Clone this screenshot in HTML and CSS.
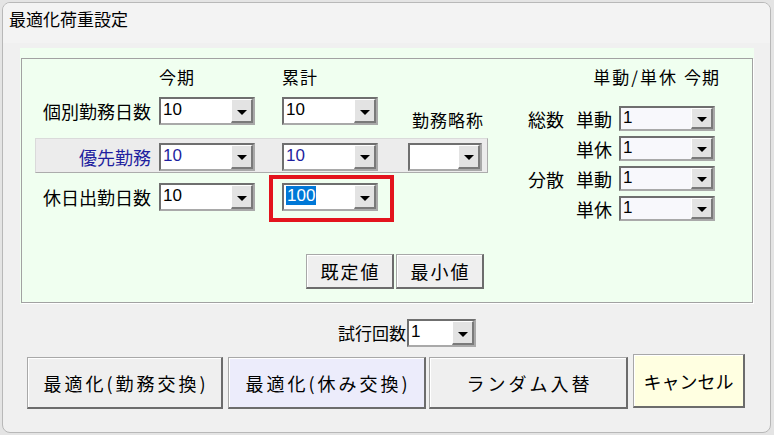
FILE: index.html
```html
<!DOCTYPE html>
<html lang="ja">
<head>
<meta charset="utf-8">
<title>最適化荷重設定</title>
<link rel="stylesheet" href="styles.css">
</head>
<body>
<div class="window">
  <div class="titlebar">最適化荷重設定</div>
  <div class="panel">
    <div class="frame">
      <div class="upper">
        <div class="left">
          <div class="hrow">
            <span class="lab-cell"></span>
            <span class="hcell">今期</span>
            <span class="sp1"></span>
            <span class="hcell">累計</span>
          </div>
          <div class="row r1">
            <span class="lab-cell">個別勤務日数</span>
            <div class="combo c-main"><span class="val">10</span><span class="dd"><i class="tri"></i></span></div>
            <span class="sp1"></span>
            <div class="combo c-main"><span class="val">10</span><span class="dd"><i class="tri"></i></span></div>
            <span class="sp2"></span>
            <span class="abbr">勤務略称</span>
          </div>
          <div class="row band">
            <span class="lab-cell blue">優先勤務</span>
            <div class="combo c-main"><span class="val blue">10</span><span class="dd"><i class="tri"></i></span></div>
            <span class="sp1"></span>
            <div class="combo c-main"><span class="val blue">10</span><span class="dd"><i class="tri"></i></span></div>
            <span class="sp2"></span>
            <div class="combo c-short"><span class="val"></span><span class="dd"><i class="tri"></i></span></div>
          </div>
          <div class="row r3">
            <span class="lab-cell">休日出勤日数</span>
            <div class="combo c-main"><span class="val">10</span><span class="dd"><i class="tri"></i></span></div>
            <span class="sp1"></span>
            <div class="combo c-main marked"><span class="val"><span class="sel">100</span></span><span class="dd"><i class="tri"></i></span><span class="hl"></span></div>
          </div>
        </div>
        <div class="right">
          <div class="rhead"><span class="rh1">単動/単休</span><span class="rh2">今期</span></div>
          <div class="rrow first">
            <span class="grp">総数</span><span class="sub">単動</span>
            <div class="combo c-right"><span class="val">1</span><span class="dd"><i class="tri"></i></span></div>
          </div>
          <div class="rrow">
            <span class="grp"></span><span class="sub">単休</span>
            <div class="combo c-right"><span class="val">1</span><span class="dd"><i class="tri"></i></span></div>
          </div>
          <div class="rrow">
            <span class="grp">分散</span><span class="sub">単動</span>
            <div class="combo c-right"><span class="val">1</span><span class="dd"><i class="tri"></i></span></div>
          </div>
          <div class="rrow">
            <span class="grp"></span><span class="sub">単休</span>
            <div class="combo c-right"><span class="val">1</span><span class="dd"><i class="tri"></i></span></div>
          </div>
        </div>
      </div>
      <div class="presets">
        <button class="btn preset">既定値</button>
        <button class="btn preset">最小値</button>
      </div>
    </div>
  </div>
  <div class="trials">
    <span class="tlabel">試行回数</span>
    <div class="combo c-trial"><span class="val">1</span><span class="dd"><i class="tri"></i></span></div>
  </div>
  <div class="actions">
    <button class="btn act a1">最適化(勤務交換)</button>
    <button class="btn act a2">最適化(休み交換)</button>
    <button class="btn act a3">ランダム入替</button>
    <button class="btn act a4">キャンセル</button>
  </div>
</div>
</body>
</html>
```
FILE: styles.css
```css
html, body {
  margin: 0;
  padding: 0;
}
body {
  background: #e4e4e4;
  width: 774px;
  height: 435px;
  overflow: hidden;
  font-family: "Noto Sans CJK JP", "Liberation Sans", sans-serif;
  color: #000;
}
.window {
  box-sizing: border-box;
  margin: 2px 0 0 2px;
  width: 769px;
  height: 431px;
  border: 1px solid #b8b8b8;
  border-radius: 8px;
  background: #f0f0f0;
  overflow: hidden;
}
.titlebar {
  height: 40px;
  box-sizing: border-box;
  padding: 3px 0 0 6px;
  font-size: 17px;
  line-height: 26px;
  background: #f3f3f3;
}
.panel {
  margin: 5px 0 0 17px;
  width: 734px;
  box-sizing: border-box;
  padding: 10px 1px 1px 1px;
  background: #f0fff0;
}
.frame {
  box-sizing: border-box;
  height: 245px;
  border: 1px solid #a2a2a2;
  box-shadow: 1px 1px 0 #ffffff;
}
.upper {
  display: flex;
  align-items: flex-start;
}
.left {
  padding: 8px 0 0 13px;
  width: 480px;
}
.hrow {
  display: flex;
  height: 20px;
  font-size: 17px;
  line-height: 20px;
}
.lab-cell {
  box-sizing: border-box;
  width: 124px;
  padding-right: 8px;
  text-align: right;
  font-size: 18px;
  line-height: 22px;
  white-space: nowrap;
}
.hcell {
  width: 96px;
  font-size: 17px;
  letter-spacing: 1px;
}
.sp1 { width: 27px; flex: none; }
.sp2 { width: 30px; flex: none; }
.row {
  display: flex;
  align-items: center;
  width: 453px;
}
.r1 { margin-top: 10px; }
.band {
  box-sizing: border-box;
  margin-top: 13px;
  height: 35px;
  padding: 3px 0 1px 0;
  border: 1px solid #dadada;
  border-right-color: #acacac;
  border-bottom-color: #acacac;
  background: #ececec;
}
.band .lab-cell { width: 123px; }
.r3 { margin-top: 10px; }
.blue { color: #1f1f9f; }
.abbr {
  align-self: flex-end;
  margin-bottom: -5px;
  padding-left: 4px;
  font-size: 17px;
  line-height: 20px;
  letter-spacing: 1px;
  white-space: nowrap;
}

/* combo box */
.combo {
  position: relative;
  display: flex;
  box-sizing: border-box;
  flex: none;
  height: 28px;
  border: 2px solid;
  border-color: #6f6f6f #a9a9a9 #a9a9a9 #6f6f6f;
  background: #ffffff;
}
.c-main { width: 96px; }
.c-short { width: 74px; }
.c-right { width: 96px; height: 25px; background: #f8f8fc; }
.c-trial { width: 69px; height: 28px; }
.val {
  flex: 1;
  padding-left: 2px;
  font-family: "Liberation Sans", Arial, sans-serif;
  font-size: 17px;
  line-height: 22px;
  white-space: nowrap;
  overflow: hidden;
}
.c-right .val { line-height: 20px; }
.sel {
  background: #0078d7;
  color: #ffffff;
  padding: 0 1px;
}
.dd {
  position: relative;
  box-sizing: border-box;
  width: 22px;
  flex: none;
  background: #e3e3e3;
  border-top: 1px solid #ffffff;
  border-left: 1px solid #ffffff;
  border-right: 2px solid #7a7a7a;
  border-bottom: 2px solid #7a7a7a;
}
.tri {
  position: absolute;
  left: 50%;
  top: 50%;
  margin: -1px 0 0 -5px;
  width: 0;
  height: 0;
  border-left: 5px solid transparent;
  border-right: 5px solid transparent;
  border-top: 5px solid #000;
}
.hl {
  position: absolute;
  left: -15px;
  top: -10px;
  width: 125px;
  height: 47px;
  box-sizing: border-box;
  border: 4px solid #e3141d;
  pointer-events: none;
}

/* right column */
.right {
  margin-left: 13px;
  padding-top: 8px;
  width: 192px;
}
.rhead {
  display: flex;
  justify-content: flex-end;
  height: 20px;
  font-size: 17px;
  line-height: 20px;
  white-space: nowrap;
}
.rh1 { letter-spacing: 2px; }
.rh2 { margin-left: 6px; letter-spacing: 1px; }
.rrow {
  display: flex;
  align-items: center;
  margin-top: 5px;
  height: 25px;
}
.rrow.first { margin-top: 19px; }
.grp, .sub {
  font-size: 18px;
  line-height: 22px;
  white-space: nowrap;
}
.grp { width: 48px; flex: none; }
.sub { width: 43px; flex: none; }

/* buttons */
.btn {
  box-sizing: border-box;
  margin: 0;
  padding: 0;
  font-family: "Noto Sans CJK JP", "Liberation Sans", sans-serif;
  color: #000;
  background: #efefef;
  border: 1px solid #a8a8a8;
  border-right: 2px solid #6c6c6c;
  border-bottom: 2px solid #6c6c6c;
  box-shadow: inset 1px 1px 0 #ffffff;
  white-space: nowrap;
}
.presets {
  display: flex;
  gap: 2px;
  margin: 33px 0 0 284px;
}
.preset {
  width: 88px;
  height: 35px;
  font-size: 18px;
  line-height: 22px;
  letter-spacing: 2px;
  text-indent: 2px;
}
.trials {
  display: flex;
  align-items: center;
  margin: 15px 0 0 335px;
}
.tlabel {
  font-size: 17px;
  line-height: 22px;
  padding-right: 1px;
  white-space: nowrap;
}
.actions {
  display: flex;
  align-items: flex-start;
  margin: 10px 0 0 24px;
}
.act {
  height: 52px;
  font-size: 18px;
  line-height: 24px;
}
.a1 { width: 196px; letter-spacing: 3px; text-indent: 3px; }
.a2 { width: 198px; margin-left: 5px; background: #ececfb; letter-spacing: 3px; text-indent: 3px; }
.a3 { width: 199px; margin-left: 3px; letter-spacing: 3px; text-indent: 3px; }
.a4 { width: 112px; margin-left: 5px; margin-top: -3px; height: 54px; background: #ffffe1; }
```
